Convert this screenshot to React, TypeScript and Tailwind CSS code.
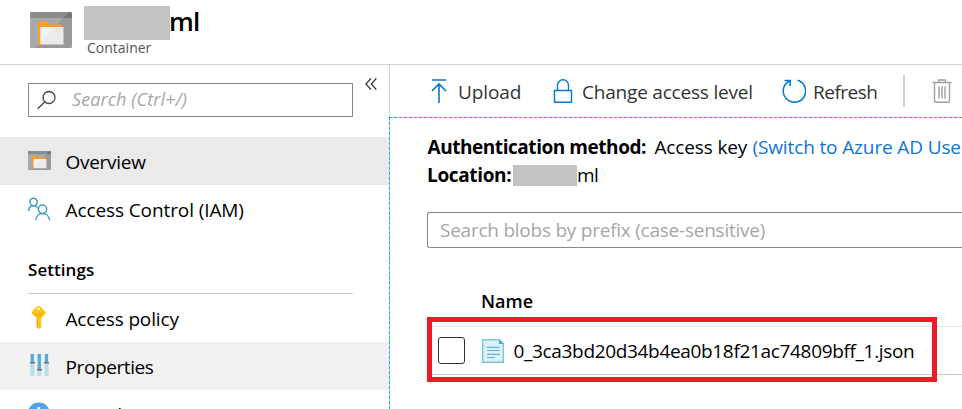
import type { ReactNode } from "react";

function ContainerIcon({ className, id }: { className: string; id: string }) {
  return (
    <svg viewBox="0 0 42 36" preserveAspectRatio="none" className={className}>
      <defs>
        <clipPath id={id}>
          <rect width="42" height="36" rx="1.5" />
        </clipPath>
      </defs>
      <g clipPath={`url(#${id})`}>
        <rect width="42" height="36" fill="#999" />
        <rect width="42" height="6" fill="#767676" />
        <path d="M0 0H39L5 36H0z" fill="#fff" opacity=".16" />
        <path d="M8 33V11q0-1.500 1.500-1.500h7.500l2 3h13V15H11v18z" fill="#ff9b26" />
        <path d="M10.500 15H33.500V32.500H10.500z" fill="#eaeaea" />
        <path d="M10.500 15H25L10.500 30.500z" fill="#f1f1f1" />
      </g>
    </svg>
  );
}

function PeopleIcon() {
  return (
    <svg viewBox="0 0 24 24" className="h-6 w-6 shrink-0" fill="none" stroke="#3f9fce" strokeWidth="1.500">
      <circle cx="5.500" cy="5" r="3.700" />
      <path d="M.7 14C.7 11 2.400 8.800 5.500 8.800c1.600 0 3 .6 4 1.700" />
      <circle cx="14.500" cy="12.200" r="4.200" />
      <path d="M7.700 23.300c.3-4 3-6.700 6.800-6.700s6.800 2.700 7.200 6.700" />
    </svg>
  );
}

function KeyIcon() {
  return (
    <svg viewBox="0 0 24 24" className="h-6 w-6 shrink-0">
      <g transform="translate(-.8 -.9)">
        <path d="M11.500.8c.8 0 1.300.2 2 .9l4.400 4.400c.9.900.9 1.900 0 2.800l-3.600 3.700v3.200l-1 1 1 1v1.200l-1 1 1 1v.8l-2.300 2.200-2.500-2.200V12.600L5.100 8.900c-.9-.9-.9-1.900 0-2.800l4.400-4.400c.7-.7 1.200-.9 2-.9z" fill="#ffc40d" />
        <path d="M9.500 12.600v9.200l1.200 1.100V12.600z" fill="#f5a623" />
        <path d="M7.800 8.500h7.400v.9H7.800zM8.500 10.300h6v.9h-6z" fill="#ef9d16" />
        <circle cx="11.500" cy="3.800" r="1.400" fill="#fff" />
      </g>
    </svg>
  );
}

function SlidersIcon() {
  return (
    <svg viewBox="0 0 24 24" className="h-6 w-6 shrink-0">
      <path d="M2.300 0h4v22h-4zM9.300 0h4v22h-4zM16.500 0h4v22h-4z" fill="#b9deed" />
      <path d="M2.800 0h3v9h-3zM9.800 0h3v16h-3zM17 0h3v9h-3z" fill="#4fafd6" />
      <path d="M2 8h5v1.500H2zM9 15h5v1.500H9zM16 8h5v1.500h-5z" fill="#737373" />
    </svg>
  );
}

function InfoIcon() {
  return (
    <svg viewBox="0 0 24 24" className="h-6 w-6 shrink-0">
      <circle cx="10.800" cy="11.500" r="11" fill="#4ba3e8" />
      <path d="M9.500 5h2.600v2.600H9.500zM9.500 10h2.600v8H9.500z" fill="#fff" />
    </svg>
  );
}

function FileIcon() {
  return (
    <svg viewBox="0 0 22 24" className="h-6 w-[22px] shrink-0">
      <path d="M.7.7h16.500l4.100 4.100v18.500H.7z" fill="#dff1f8" stroke="#7cc5e0" strokeWidth="1.400" />
      <path d="M17 0l5 5h-5z" fill="#4ba9d0" />
      <path d="M5 8.300h12.500M5 11.500h13M5 15.300h13M5 18.500h8" stroke="#5fb4d6" strokeWidth="1.200" />
    </svg>
  );
}

function NavItem({ icon, bg = "", spacing, children }: { icon: ReactNode; bg?: string; spacing: string; children: ReactNode }) {
  return (
    <div className={`flex h-12 shrink-0 items-center pl-7 ${bg}`}>
      <span className="flex w-[37.5px] shrink-0">{icon}</span>
      <span className={`pt-[2px] ${spacing}`}>{children}</span>
    </div>
  );
}

function Header() {
  return (
    <header className="flex h-[65px] shrink-0 border-b border-[#d2d2d2] pl-[30px]">
      <ContainerIcon id="header-icon" className="mt-3 h-9 w-[42px] shrink-0" />
      <div className="ml-3 pt-[6px]">
        <div className="flex h-[34px]">
          <div className="w-[86px] bg-[#c3c3c3]" />
          <h1 className="-ml-px text-[26px] leading-[31px] font-semibold tracking-[-0.7px]">ml</h1>
        </div>
        <p className="ml-[3px] text-[14px] leading-4 text-[#555]">Container</p>
      </div>
    </header>
  );
}

function Sidebar() {
  return (
    <aside className="flex w-[389px] shrink-0 flex-col overflow-hidden">
      <div className="flex pt-[18px] pl-7">
        <div className="flex h-[34px] w-[325px] items-center border border-[#8a8886] pl-2">
          <svg viewBox="0 0 20 20" className="h-5 w-5" fill="none" stroke="#444" strokeWidth="1.300">
            <circle cx="12" cy="7.500" r="6" />
            <path d="M7.800 11.800L.8 18.800" />
          </svg>
          <span className="ml-[15px] pb-[3px] text-[18px] tracking-[0.1px] text-[#a6a6a6] italic">Search (Ctrl+/)</span>
        </div>
        <svg viewBox="0 0 12 12" className="-mt-[5px] ml-3 h-3 w-3" fill="none" stroke="#333" strokeWidth="1.200">
          <path d="M6 .5L.9 6 6 11.500M11.300.5L6.200 6l5.100 5.500" />
        </svg>
      </div>
      <nav className="mt-5">
        <NavItem bg="bg-[#ebeae9]" spacing="tracking-[-0.280px]" icon={<ContainerIcon id="nav-icon" className="-mt-px h-[19px] w-[23px]" />}>Overview</NavItem>
        <NavItem spacing="tracking-[-0.1px]" icon={<PeopleIcon />}>Access Control (IAM)</NavItem>
        <h2 className="mr-9 ml-7 h-[61px] border-b border-[#c8c8c8] pt-[25px] text-[17px] leading-6 font-semibold tracking-[0.050px]">Settings</h2>
        <NavItem spacing="tracking-[-0.150px]" icon={<KeyIcon />}>Access policy</NavItem>
        <NavItem bg="bg-[#f2f1f0]" spacing="tracking-[-0.4px]" icon={<SlidersIcon />}>Properties</NavItem>
        <NavItem spacing="tracking-[0px]" icon={<InfoIcon />}>Metadata</NavItem>
      </nav>
    </aside>
  );
}

function Toolbar() {
  return (
    <div className="flex h-[52px] shrink-0 items-center border-l border-[#d2d2d2] pl-[41px] text-[#333]">
      <svg viewBox="0 0 16 24" className="h-6 w-4 shrink-0" fill="none" stroke="#0078d4" strokeWidth="1.600">
        <path d="M1 1h14M8 24V5.500M1 12l7-7 7 7" />
      </svg>
      <span className="ml-[11px] w-[96px] shrink-0 pt-[2px] tracking-[-0.1px]">Upload</span>
      <svg viewBox="0 0 20 24" className="-ml-px h-6 w-5 shrink-0" fill="none" stroke="#0078d4" strokeWidth="1.400">
        <path d="M1.500 11.500h17v11.700h-17zM4.500 11.500V6.300a5.500 5.500 0 0 1 11 0v5.200" />
      </svg>
      <span className="ml-[9px] w-[200px] shrink-0 pt-[2px] whitespace-nowrap tracking-[-0.2px]">Change access level</span>
      <svg viewBox="0 0 24 24" className="h-6 w-6 shrink-0" fill="none" stroke="#0078d4" strokeWidth="1.500">
        <path d="M15.500 1.300A11.200 11.200 0 1 1 7.500 2M2.500 1.500h5.700v5.800" />
      </svg>
      <span className="ml-[7px] w-[65px] shrink-0 pt-[2px] tracking-[-0.5px]">Refresh</span>
      <div className="ml-[25px] h-8 w-[2px] shrink-0 bg-[#d0d0d0]" />
      <svg viewBox="0 0 20 24" className="ml-[27px] h-6 w-5 shrink-0" fill="none" stroke="#a19f9d" strokeWidth="1.400">
        <path d="M.5 3.500h19M6.500 3.500V1h7v2.500M2.500 3.500v18.300q0 1.500 1.500 1.500h12q1.500 0 1.500-1.500V3.500M7 7.500v12M10 7.500v12M13 7.500v12" />
      </svg>
    </div>
  );
}

function Content() {
  return (
    <section className="flex min-h-0 flex-1 flex-col overflow-hidden border-t border-l border-dashed border-[#00adef] bg-[#d2d2d2]">
      <div className="min-h-0 flex-1 bg-white pl-[37px]">
        <div className="pt-[15px] leading-7 whitespace-nowrap">
          <p className="flex pl-[0.5px]">
            <b className="w-[227px] shrink-0 tracking-[-0.450px]">Authentication method:</b>
            <span className="w-[98px] shrink-0 tracking-[-0.150px]">Access key</span>
            <span className="tracking-[-0.130px] text-[#0f74d6]">(Switch to Azure AD Use</span>
          </p>
          <p className="flex items-center">
            <b className="w-[86px] shrink-0 tracking-[-0.350px]">Location:</b>
            <span className="h-[21px] w-16 bg-[#c3c3c3]" />
            <span className="tracking-[-0.7px]">ml</span>
          </p>
        </div>
        <div className="mt-[23px] flex h-9 items-center rounded-l-[3px] border border-r-0 border-[#8a8886] pl-3 tracking-[-0.240px] text-[#a6a6a6]">
          Search blobs by prefix (case-sensitive)
        </div>
        <div className="mt-[38px] pl-[54px] text-[18px] leading-[30px] font-semibold">Name</div>
        <div className="relative mt-[10px] flex h-[49px] items-center border-t border-b border-t-[#e6e6e6] border-b-[#c8c8c8] pl-[11px]">
          <div className="h-[27px] w-[27px] shrink-0 rounded-[3px] border border-[#323130]" />
          <div className="ml-[17px] flex"><FileIcon /></div>
          <span className="ml-[9.5px] whitespace-nowrap tracking-[-0.330px]">0_3ca3bd20d34b4ea0b18f21ac74809bff_1.json</span>
          <div className="absolute -top-[10px] left-0 h-[65px] w-[510px] border-[5px] border-[#ed1c24]" />
        </div>
      </div>
    </section>
  );
}

export default function App() {
  return (
    <div className="flex h-[409px] w-[962px] flex-col overflow-hidden bg-white font-['Open_Sans','Noto_Sans',sans-serif] text-[19px] leading-[26px] text-black">
      <Header />
      <div className="flex min-h-0 flex-1">
        <Sidebar />
        <main className="flex min-w-0 flex-1 flex-col">
          <Toolbar />
          <Content />
        </main>
      </div>
    </div>
  );
}
